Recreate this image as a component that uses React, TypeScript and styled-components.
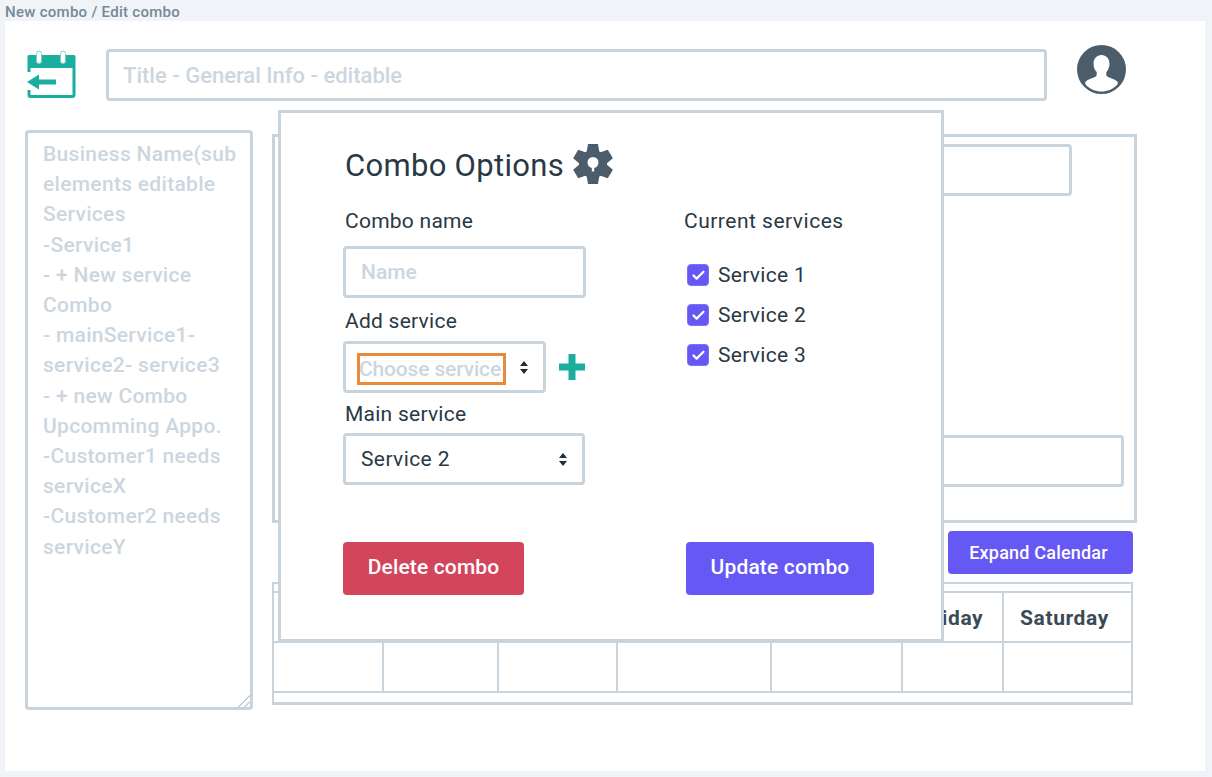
import React from "react";
import styled, { createGlobalStyle } from "styled-components";
import { Check } from "lucide-react";

const sidebarText =
  "Business Name(sub elements editable Services\n-Service1\n- + New service Combo\n- mainService1- service2- service3\n- + new Combo\nUpcomming Appo.\n-Customer1 needs serviceX\n-Customer2 needs serviceY";

const days = ["Sunday", "Monday", "Tuesday", "Wednesday", "Thursday", "Friday", "Saturday"];
const services = ["Service 1", "Service 2", "Service 3"];

const CalendarIcon = () => (
  <svg width="49" height="48" viewBox="0 0 49 48" fill="none">
    <path d="M2 5h45a1.500 1.500 0 0 1 1.500 1.500V18H.5V6.500A1.500 1.500 0 0 1 2 5z" fill="#1aae9f" />
    <path d="M47 18v27a1.500 1.500 0 0 1-1.500 1.500H3.500A1.500 1.500 0 0 1 2 45v-5M2 18v4" stroke="#1aae9f" strokeWidth="3" />
    <rect x="9.500" y="1" width="5" height="12.500" rx="2.500" fill="#fff" stroke="#7fd0c7" />
    <rect x="33.500" y="1" width="5" height="12.500" rx="2.500" fill="#fff" stroke="#7fd0c7" />
    <path d="M10 29.500h19v5H10z" fill="#1aae9f" />
    <path d="M0 32l12-7.500v15z" fill="#1aae9f" />
  </svg>
);

const AvatarIcon = () => (
  <svg width="49" height="49" viewBox="0 0 49 49">
    <circle cx="24.5" cy="24.5" r="24.5" fill="#4b5c6b" />
    <path
      d="M24.500 10c4.700 0 8 3.600 8 8.800 0 3.500-1.300 6.400-3.200 8.300v2.600c0 1.300 1 2 2.400 2.600 3.400 1.300 6.800 2.500 8.600 4.300 1.200 1.300.3 3-.8 4-3.800 3.700-9 6-15 6s-11.200-2.300-15-6c-1.100-1-2-2.700-.8-4 1.800-1.800 5.200-3 8.600-4.300 1.400-.6 2.400-1.300 2.400-2.600v-2.600c-1.900-1.900-3.200-4.800-3.200-8.300 0-5.200 3.300-8.800 8-8.800z"
      fill="#fff"
    />
  </svg>
);

const GearIcon = () => (
  <GearSvg width="40" height="42" viewBox="0 0 40 42">
    <g fill="#4b5c6b">
      {[0, 60, 120, 180, 240, 300].map((deg) => (
        <path key={deg} d="M15 1h10l1.500 9h-13z" transform={`rotate(${deg} 20 21)`} />
      ))}
      <circle cx="20" cy="21" r="14" />
    </g>
    <circle cx="20" cy="19.500" r="5.500" fill="#fff" />
    <path d="M18.800 22h2.400v6.500h-2.400z" fill="#fff" />
  </GearSvg>
);

const PlusIcon = () => (
  <svg width="26" height="26" viewBox="0 0 26 26">
    <path d="M9.500 0h7v9.500H26v7h-9.500V26h-7v-9.500H0v-7h9.500z" fill="#1aae9f" />
  </svg>
);

const UpDownIcon = () => (
  <svg width="8" height="13" viewBox="0 0 8 13">
    <path d="M4 0l4 5H0zM4 13L0 8h8z" fill="#1f2d3a" />
  </svg>
);

const App = () => {
  return (
    <>
      <GlobalStyle />
      <Breadcrumb>New combo / Edit combo</Breadcrumb>
      <Panel>
        <Header>
          <LogoSlot>
            <CalendarIcon />
          </LogoSlot>
          <TitleInput placeholder="Title - General Info - editable" />
          <AvatarSlot>
            <AvatarIcon />
          </AvatarSlot>
        </Header>

        <Main>
          <Sidebar>{sidebarText}</Sidebar>
          <Content>
            <DetailBox>
              <TopField />
              <BottomField />
            </DetailBox>
            <ExpandButton>Expand Calendar</ExpandButton>
            <Calendar>
              <CalendarRow>
                {days.map((day) => (
                  <DayCell key={day}>{day}</DayCell>
                ))}
              </CalendarRow>
              <CalendarRow>
                {days.map((day) => (
                  <SlotCell key={day} />
                ))}
              </CalendarRow>
            </Calendar>
          </Content>
        </Main>

        <Modal>
          <ModalTitle>
            Combo Options <GearIcon />
          </ModalTitle>
          <Columns>
            <LeftColumn>
              <Label>Combo name</Label>
              <NameInput placeholder="Name" />
              <Label $top={10}>Add service</Label>
              <AddRow>
                <SelectBox $width={203} $arrowGap={15}>
                  <FocusedOption>Choose service</FocusedOption>
                  <UpDownIcon />
                </SelectBox>
                <PlusIcon />
              </AddRow>
              <Label $top={8}>Main service</Label>
              <SelectBox $width={242} $arrowGap={15} $top={6}>
                <SelectValue>Service 2</SelectValue>
                <UpDownIcon />
              </SelectBox>
            </LeftColumn>
            <RightColumn>
              <ServicesLabel>Current services</ServicesLabel>
              <ServiceList>
                {services.map((name) => (
                  <ServiceRow key={name}>
                    <CheckMark>
                      <Check size={15} strokeWidth={3.6} color="#fff" />
                    </CheckMark>
                    {name}
                  </ServiceRow>
                ))}
              </ServiceList>
            </RightColumn>
          </Columns>
          <Footer>
            <ActionButton $color="#d3455b" $width={181}>
              Delete combo
            </ActionButton>
            <ActionButton $color="#6558f5" $width={188}>
              Update combo
            </ActionButton>
          </Footer>
        </Modal>
      </Panel>
    </>
  );
};

export default App;

const GlobalStyle = createGlobalStyle`
  html, body {
    margin: 0;
    padding: 0;
    background: #f0f4f8;
    font-family: Roboto, "Noto Sans", sans-serif;
    color: #293845;
  }
  * {
    box-sizing: border-box;
  }
  input::placeholder {
    color: #ccd6df;
    opacity: 1;
  }
`;

const GearSvg = styled.svg`
  margin-top: -2px;
`;

const Breadcrumb = styled.div`
  height: 21px;
  padding-left: 5px;
  font-size: 15px;
  font-weight: 500;
  letter-spacing: 0.28px;
  line-height: 24px;
  color: #788896;
`;

const Panel = styled.div`
  position: relative;
  width: 1200px;
  height: 750px;
  margin-left: 5px;
  padding: 24px 0 0 20px;
  background: #fff;
`;

const Header = styled.div`
  display: flex;
  align-items: flex-start;
  height: 56px;
`;

const LogoSlot = styled.div`
  display: flex;
  margin: 5px 0 0 2px;
`;

const AvatarSlot = styled.div`
  display: flex;
  margin-left: 30px;
`;

const TitleInput = styled.input`
  width: 941px;
  height: 52px;
  margin: 4px 0 0 30px;
  padding: 0 14px;
  border: 3px solid #c9d3dc;
  border-radius: 4px;
  outline: none;
  font-family: inherit;
  font-size: 22px;
  font-weight: 500;
  color: #293845;
`;

const Main = styled.div`
  display: flex;
  align-items: flex-start;
  gap: 19px;
  margin-top: 29px;
`;

const Sidebar = styled.div`
  width: 228px;
  height: 580px;
  padding: 6px 10px 6px 15px;
  border: 3px solid #c9d3dc;
  border-radius: 4px;
  overflow: auto;
  resize: both;
  white-space: pre-line;
  font-size: 21px;
  font-weight: 500;
  letter-spacing: 0.3px;
  line-height: 30.2px;
  color: #ccd6df;

  &::-webkit-resizer {
    background: linear-gradient(
      135deg,
      transparent 58%,
      #c3cfd9 58%,
      #c3cfd9 64%,
      transparent 64%,
      transparent 78%,
      #c3cfd9 78%,
      #c3cfd9 84%,
      transparent 84%
    );
  }
`;

const Content = styled.div`
  display: flex;
  flex-direction: column;
  width: 865px;
  margin-top: 4px;
`;

const DetailBox = styled.div`
  display: flex;
  flex-direction: column;
  align-items: flex-end;
  height: 389px;
  padding: 7px 0 33px;
  border: 3px solid #c9d3dc;
`;

const Field = styled.div`
  height: 52px;
  border: 3px solid #c9d3dc;
  border-radius: 4px;
`;

const TopField = styled(Field)`
  width: 700px;
  margin-right: 62px;
`;

const BottomField = styled(Field)`
  width: 800px;
  margin-top: auto;
  margin-right: 10px;
`;

const ExpandButton = styled.button`
  align-self: flex-end;
  width: 185px;
  height: 43px;
  margin: 8px 4px 0 0;
  padding: 0 10px 0 6px;
  border: none;
  border-radius: 4px;
  background: #6558f5;
  color: #fff;
  font-family: inherit;
  font-size: 18px;
  font-weight: 500;
  letter-spacing: 0.2px;
`;

const Calendar = styled.div`
  width: 861px;
  height: 123px;
  margin-top: 8px;
  padding-top: 7px;
  border: 2px solid #c9d3dc;
  border-bottom-width: 3px;
`;

const CalendarRow = styled.div`
  display: grid;
  grid-template-columns: 110px 115px 119px 154px 131px 101px 1fr;
  height: 50px;
  border-top: 2px solid #c9d3dc;
  &:last-child {
    height: 52px;
    border-bottom: 2px solid #c9d3dc;
  }
`;

const DayCell = styled.div`
  display: flex;
  align-items: center;
  justify-content: center;
  padding-top: 2px;
  border-right: 2px solid #c9d3dc;
  font-size: 21px;
  font-weight: 700;
  letter-spacing: 0.6px;
  color: #3b4a57;
  &:last-child {
    padding-right: 6px;
    border-right: none;
  }
`;

const SlotCell = styled.div`
  border-right: 2px solid #c9d3dc;
  &:last-child {
    border-right: none;
  }
`;

const Modal = styled.div`
  position: absolute;
  top: 89px;
  left: 273px;
  display: flex;
  flex-direction: column;
  width: 666px;
  height: 532px;
  padding: 30px 67px 44px 62px;
  border: 3px solid #c9d3dc;
  background: #fff;
`;

const ModalTitle = styled.div`
  display: flex;
  align-items: center;
  gap: 9px;
  height: 42px;
  padding: 2px 0 0 2px;
  font-size: 31px;
  letter-spacing: 0.3px;
  color: #293845;
`;

const Columns = styled.div`
  display: flex;
  margin-top: 23px;
`;

const LeftColumn = styled.div`
  width: 339px;
`;

const RightColumn = styled.div`
  flex: 1;
`;

const Label = styled.div<{ $top?: number }>`
  height: 26px;
  margin-top: ${(p) => p.$top ?? 0}px;
  padding-left: 2px;
  font-size: 21px;
  letter-spacing: 0.25px;
  line-height: 26px;
  color: #293845;
`;

const ServicesLabel = styled(Label)`
  letter-spacing: 0.5px;
`;

const NameInput = styled.input`
  display: block;
  width: 243px;
  height: 52px;
  margin-top: 12px;
  padding: 0 15px;
  border: 3px solid #c9d3dc;
  border-radius: 4px;
  outline: none;
  font-family: inherit;
  font-size: 21px;
  font-weight: 500;
`;

const AddRow = styled.div`
  display: flex;
  align-items: center;
  gap: 13px;
  margin-top: 7px;
`;

const SelectBox = styled.div<{ $width: number; $arrowGap: number; $top?: number }>`
  display: flex;
  align-items: center;
  justify-content: space-between;
  width: ${(p) => p.$width}px;
  height: 52px;
  margin-top: ${(p) => p.$top ?? 0}px;
  padding: 0 ${(p) => p.$arrowGap}px 0 11px;
  border: 3px solid #c9d3dc;
  border-radius: 4px;
`;

const FocusedOption = styled.span`
  width: 149px;
  height: 32px;
  margin-top: 4px;
  border: 3px solid #e8893c;
  font-size: 21px;
  font-weight: 500;
  letter-spacing: -0.15px;
  line-height: 26px;
  text-indent: -1px;
  white-space: nowrap;
  overflow: hidden;
  color: #ccd6df;
`;

const SelectValue = styled.span`
  padding-left: 4px;
  font-size: 21px;
  letter-spacing: 0.4px;
  color: #293845;
`;

const ServiceList = styled.div`
  display: flex;
  flex-direction: column;
  gap: 14px;
  margin-top: 28px;
`;

const ServiceRow = styled.div`
  display: flex;
  align-items: center;
  gap: 9px;
  height: 26px;
  padding-left: 5px;
  font-size: 21px;
  letter-spacing: 0.3px;
  color: #293845;
`;

const CheckMark = styled.span`
  display: flex;
  align-items: center;
  justify-content: center;
  width: 22px;
  height: 22px;
  border: 1px solid #7c72f7;
  border-radius: 4px;
  background: #6558f5;
`;

const Footer = styled.div`
  display: flex;
  justify-content: space-between;
  margin-top: auto;
`;

const ActionButton = styled.button<{ $color: string; $width: number }>`
  width: ${(p) => p.$width}px;
  height: 53px;
  padding: 0 0 3px;
  border: none;
  border-radius: 4px;
  background: ${(p) => p.$color};
  color: #fff;
  font-family: inherit;
  font-size: 21px;
  font-weight: 500;
  letter-spacing: 0.15px;
`;
